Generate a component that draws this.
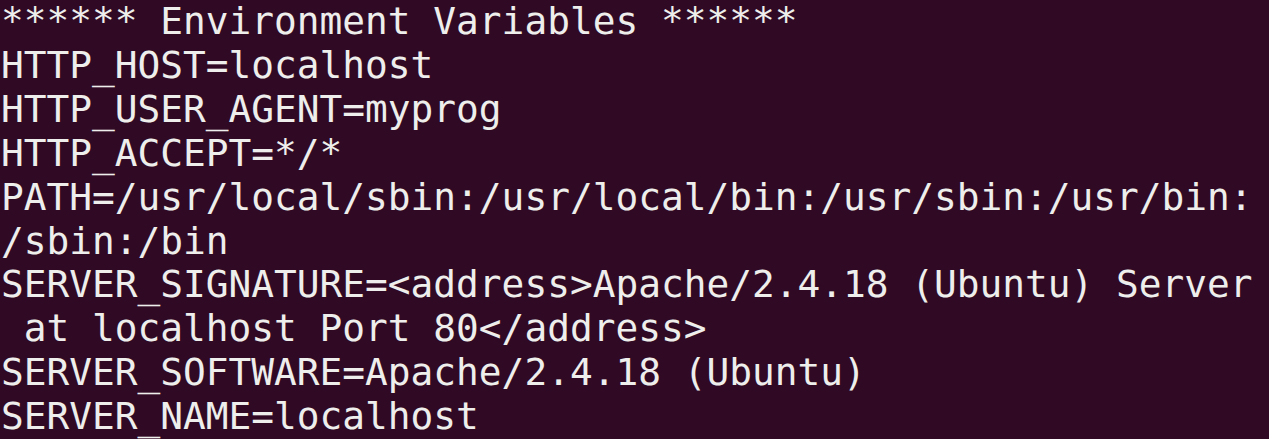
export default function App() {
  const lines = [
    "****** Environment Variables ******",
    "HTTP_HOST=localhost",
    "HTTP_USER_AGENT=myprog",
    "HTTP_ACCEPT=*/*",
    "PATH=/usr/local/sbin:/usr/local/bin:/usr/sbin:/usr/bin:",
    "/sbin:/bin",
    "SERVER_SIGNATURE=<address>Apache/2.4.18 (Ubuntu) Server",
    " at localhost Port 80</address>",
    "SERVER_SOFTWARE=Apache/2.4.18 (Ubuntu)",
    "SERVER_NAME=localhost",
  ];
  return (
    <div className="w-[1269px] h-[439px] overflow-hidden bg-[#300a24] text-[#eeeeec] font-['DejaVu_Sans_Mono',monospace] text-[37.8px] leading-[43.9px] pl-[1px]">
      {lines.map((l, i) => (
        <div key={i} className="whitespace-pre">{l}</div>
      ))}
    </div>
  );
}
